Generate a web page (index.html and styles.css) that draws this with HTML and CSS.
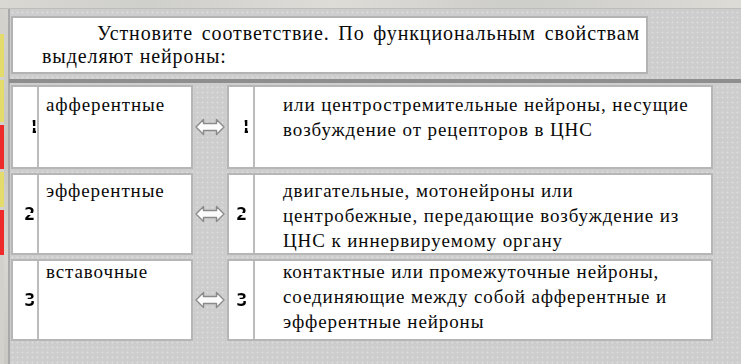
FILE: index.html
```html
<!DOCTYPE html>
<html lang="ru">
<head>
<meta charset="utf-8">
<link rel="stylesheet" href="styles.css">
</head>
<body>
<div class="topbar"></div>
<div class="main">
  <div class="side">
    <div class="strip">
      <span class="seg s-gap" style="height:25px"></span>
      <span class="seg s-y" style="height:43px"></span>
      <span class="seg s-gap" style="height:3px"></span>
      <span class="seg s-y" style="height:42px"></span>
      <span class="seg s-gap" style="height:3px"></span>
      <span class="seg s-r" style="height:44px"></span>
      <span class="seg s-gap" style="height:3px"></span>
      <span class="seg s-y" style="height:35px"></span>
      <span class="seg s-gap" style="height:3px"></span>
      <span class="seg s-r" style="height:45px"></span>
    </div>
    <div class="marble"></div>
    <div class="vline"></div>
  </div>
  <div class="content">
    <div class="title">
      <p class="title-text">Устновите соответствие. По функциональным свойствам выделяют нейроны:</p>
    </div>
    <div class="divider"></div>
    <div class="rows">
      <div class="row r1">
        <div class="box left">
          <div class="num"><span class="digit d1">1</span></div>
          <div class="txt">афферентные</div>
        </div>
        <div class="arrow">
          <svg width="30" height="18" viewBox="0 0 30 18"><polygon points="1,9 8.5,1.5 8.5,5.5 21.5,5.5 21.5,1.5 29,9 21.5,16.5 21.5,12.5 8.5,12.5 8.5,16.5" fill="#fbfbfb" stroke="#8a8a8a" stroke-width="1.4" stroke-linejoin="round"/></svg>
        </div>
        <div class="box right">
          <div class="num"><span class="digit d1">1</span></div>
          <div class="txt">или центростремительные нейроны, несущие возбуждение от рецепторов в ЦНС</div>
        </div>
      </div>
      <div class="row r2">
        <div class="box left">
          <div class="num"><span class="digit">2</span></div>
          <div class="txt">эфферентные</div>
        </div>
        <div class="arrow">
          <svg width="30" height="18" viewBox="0 0 30 18"><polygon points="1,9 8.5,1.5 8.5,5.5 21.5,5.5 21.5,1.5 29,9 21.5,16.5 21.5,12.5 8.5,12.5 8.5,16.5" fill="#fbfbfb" stroke="#8a8a8a" stroke-width="1.4" stroke-linejoin="round"/></svg>
        </div>
        <div class="box right">
          <div class="num"><span class="digit">2</span></div>
          <div class="txt">двигательные, мотонейроны или центробежные, передающие возбуждение из ЦНС к иннервируемому органу</div>
        </div>
      </div>
      <div class="row r3">
        <div class="box left">
          <div class="num"><span class="digit">3</span></div>
          <div class="txt">вставочные</div>
        </div>
        <div class="arrow">
          <svg width="30" height="18" viewBox="0 0 30 18"><polygon points="1,9 8.5,1.5 8.5,5.5 21.5,5.5 21.5,1.5 29,9 21.5,16.5 21.5,12.5 8.5,12.5 8.5,16.5" fill="#fbfbfb" stroke="#8a8a8a" stroke-width="1.4" stroke-linejoin="round"/></svg>
        </div>
        <div class="box right">
          <div class="num"><span class="digit">3</span></div>
          <div class="txt">контактные или промежуточные нейроны, соединяющие между собой афферентные и эфферентные нейроны</div>
        </div>
      </div>
    </div>
  </div>
</div>
</body>
</html>
```
FILE: styles.css
```css
* { box-sizing: border-box; }
html, body { margin: 0; padding: 0; }
body {
  width: 741px;
  height: 364px;
  overflow: hidden;
  background-color: #cdcdcd;
  background-image: radial-gradient(circle, #dcdcdc 0.8px, transparent 1.2px);
  background-size: 5px 5px;
  font-family: "Liberation Serif", "Times New Roman", serif;
  color: #0a0a0a;
}
.topbar {
  height: 9px;
  background: linear-gradient(90deg, #d9d8d3, #cfcfcb 20%, #dedcd7 45%, #cdcdc9 70%, #dcdbd6);
  border-bottom: 1px solid #bdbdb9;
}
.main { display: flex; height: 355px; }
.side { display: flex; width: 10px; flex: none; }
.strip { width: 4px; display: flex; flex-direction: column; background: #d2d1cc; }
.seg { display: block; width: 4px; }
.s-gap { background: #d2d1cc; }
.s-y { background: #e3dc6c; }
.s-r { background: #ee2a2a; }
.marble { width: 4px; background: linear-gradient(180deg, #d4d3ce, #c7c6c1 40%, #d8d7d2 70%, #c9c8c3); }
.vline { width: 2px; background: #a9a9a9; }
.content { flex: 1; padding-left: 1px; }
.title {
  margin-top: 7px;
  width: 637px;
  height: 58px;
  background: #fff;
  border: 2px solid #b3b3b3;
  padding: 4px 6px 0 29px;
}
.title-text {
  margin: 0;
  font-size: 20px;
  line-height: 23px;
  letter-spacing: 0.9px;
  text-align: justify;
  text-indent: 55px;
}
.divider {
  margin-top: 5px;
  height: 4px;
  background: #8e8e8e;
  margin-left: -2px;
}
.rows { display: flex; flex-direction: column; gap: 4px; margin-top: 2px; }
.row { display: flex; align-items: stretch; }
.r1 { height: 84px; }
.r2 { height: 82px; }
.r3 { height: 82px; }
.box {
  display: flex;
  background: #fff;
  border: 2px solid #b6b6b6;
}
.left { width: 182px; }
.right { width: 486px; }
.num {
  width: 26px;
  flex: none;
  border-right: 2px solid #bcbcbc;
  display: flex;
  align-items: center;
  justify-content: flex-end;
  padding-right: 2px;
}
.right .num { padding-right: 6px; }
.digit {
  font-family: "DejaVu Sans Mono", monospace;
  font-weight: bold;
  font-size: 18px;
  line-height: 18px;
  color: transparent;
  background: linear-gradient(180deg, #000 0 42%, transparent 42% 54%, #000 54% 100%);
  -webkit-background-clip: text;
  background-clip: text;
}
.d1 {
  clip-path: inset(0 28% 12% 42%);
  margin-right: -4px;
}
.txt {
  flex: 1;
  font-size: 19px;
  line-height: 25px;
  letter-spacing: 0.9px;
  padding: 5px 6px 0 7px;
  white-space: nowrap;
}
.right .txt { padding-left: 28px; white-space: normal; padding-right: 10px; }
.r2 .txt { padding-top: 3px; }
.r3 .txt { padding-top: 0; margin-top: -2px; }
.arrow {
  width: 34px;
  flex: none;
  display: flex;
  align-items: center;
  justify-content: center;
}
```
